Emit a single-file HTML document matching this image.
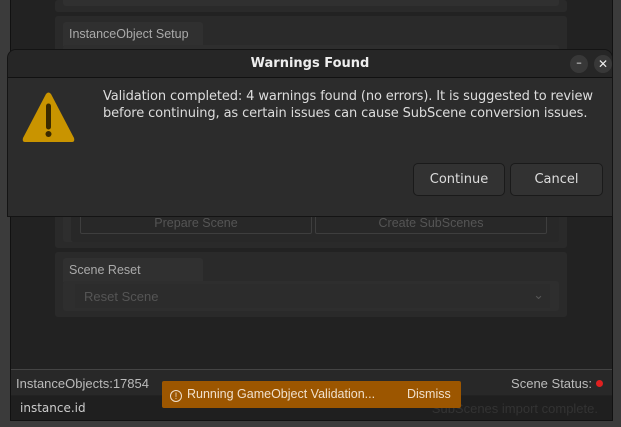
<!DOCTYPE html><html><head><style>
*{margin:0;padding:0;box-sizing:border-box}
body{width:621px;height:427px;background:#3b3b3b;position:relative;overflow:hidden;font-family:"DejaVu Sans","Liberation Sans",sans-serif;}
.a{position:absolute}
.l{font-family:"Liberation Sans",sans-serif}
.win{left:10px;top:0;width:603px;height:421px;background:#222;border:1px solid #111;border-top:none}
.panel{background:#2a2a2a;border-radius:3px}
.tab{background:#303030;color:#aaa;font-size:12.5px;padding:5px 0 0 6px;border-radius:3px 3px 0 0;font-family:"Liberation Sans",sans-serif;white-space:nowrap}
.btn{border:1px solid #3e3e3e;border-radius:2px;color:#555;font-size:12.5px;text-align:center;line-height:16px;font-family:"Liberation Sans",sans-serif}
</style></head><body>
<div class="a win"></div>
<div class="a panel" style="left:55px;top:0;width:512px;height:12px"></div>
<div class="a" style="left:63px;top:0;width:496px;height:6px;background:#303030;border-radius:0 0 3px 3px"></div>
<div class="a panel" style="left:55px;top:16px;width:512px;height:232px"></div>
<div class="a tab" style="left:63px;top:22px;width:140px;height:24px">InstanceObject Setup</div>
<div class="a" style="left:63px;top:45px;width:496px;height:197px;background:#2e2e2e;border-radius:3px"></div>
<div class="a" style="left:71px;top:205px;width:488px;height:37px;background:#282828;border-radius:3px"></div>
<div class="a btn" style="left:80px;top:214px;width:232px;height:20px">Prepare Scene</div>
<div class="a btn" style="left:315px;top:214px;width:232px;height:20px">Create SubScenes</div>
<div class="a panel" style="left:55px;top:252px;width:512px;height:65px"></div>
<div class="a tab" style="left:63px;top:258px;width:140px;height:24px">Scene Reset</div>
<div class="a" style="left:63px;top:281px;width:496px;height:30px;background:#2e2e2e;border-radius:3px"></div>
<div class="a l" style="left:75px;top:284px;width:475px;height:24px;background:#2c2c2c;color:#555;font-size:13px;padding:5px 0 0 9px">Reset Scene<span style="position:absolute;right:6px;top:3px;color:#555">⌄</span></div>
<div class="a" style="left:11px;top:369px;width:601px;height:1px;background:#444"></div>
<div class="a l" style="left:11px;top:370px;width:601px;height:25px;background:#282828;color:#bbb;font-size:13px;padding:6px 0 0 5px">InstanceObjects:17854<span style="position:absolute;right:20px;top:6px">Scene Status:</span><span style="position:absolute;right:9px;top:10px;width:7px;height:7px;border-radius:50%;background:#e02020"></span></div>
<div class="a" style="left:11px;top:396px;width:601px;height:24px;background:#1f1f1f;color:#ccc;font-size:12px;padding:5px 0 0 9px">instance.id<span class="l" style="position:absolute;right:14px;top:5px;color:#333;font-size:13px">SubScenes import complete.</span></div>
<div class="a l" style="left:162px;top:381px;width:299px;height:27px;background:#9c5600;border-radius:2px;color:#f0e0cc;font-size:12.5px;padding:6px 0 0 8px"><span style="display:inline-block;width:12px;height:12px;border:1px solid #f0e0cc;border-radius:50%;font-size:9px;line-height:10px;text-align:center;vertical-align:-1px;margin-right:5px">!</span>Running GameObject Validation...<span style="position:absolute;left:245px;top:6px">Dismiss</span></div>
<div class="a" style="left:7px;top:49px;width:606px;height:168px;background:#2c2c2c;border:1px solid #141414;border-radius:9px 9px 0 0;overflow:hidden">
<div class="a" style="left:0;top:0;width:604px;height:28px;background:#262626;border-bottom:1px solid #111;color:#eee;font-weight:bold;font-size:13px;text-align:center;line-height:28px">Warnings Found</div>
<div class="a" style="left:562px;top:5px;width:18px;height:18px;border-radius:50%;background:#383838;color:#eee;font-size:11px;text-align:center;line-height:16px">–</div>
<div class="a" style="left:586px;top:5px;width:18px;height:18px;border-radius:50%;background:#383838;color:#eee;font-size:12px;text-align:center;line-height:18px">✕</div>
<svg class="a" style="left:14px;top:42px" width="53" height="53" viewBox="0 0 53 53"><path d="M24 2 Q26.5 -1 29 2 L52 46 Q53 50 50 50 L3 50 Q0 50 1 46Z" fill="#c99400"/><path d="M26.5 14 L26.5 35" stroke="#3a2a00" stroke-width="5" stroke-linecap="round"/><circle cx="26.5" cy="42" r="3" fill="#3a2a00"/></svg>
<div class="a" style="left:95px;top:38px;width:510px;color:#ddd;font-size:13px;line-height:17px;letter-spacing:-0.12px">Validation completed: 4 warnings found (no errors). It is suggested to review<br>before continuing, as certain issues can cause SubScene conversion issues.</div>
<div class="a" style="left:405px;top:113px;width:92px;height:33px;background:#323232;border:1px solid #1a1a1a;border-radius:5px;color:#ddd;font-size:13px;text-align:center;line-height:31px">Continue</div>
<div class="a" style="left:502px;top:113px;width:93px;height:33px;background:#323232;border:1px solid #1a1a1a;border-radius:5px;color:#ddd;font-size:13px;text-align:center;line-height:31px">Cancel</div>
</div>
</body></html>
